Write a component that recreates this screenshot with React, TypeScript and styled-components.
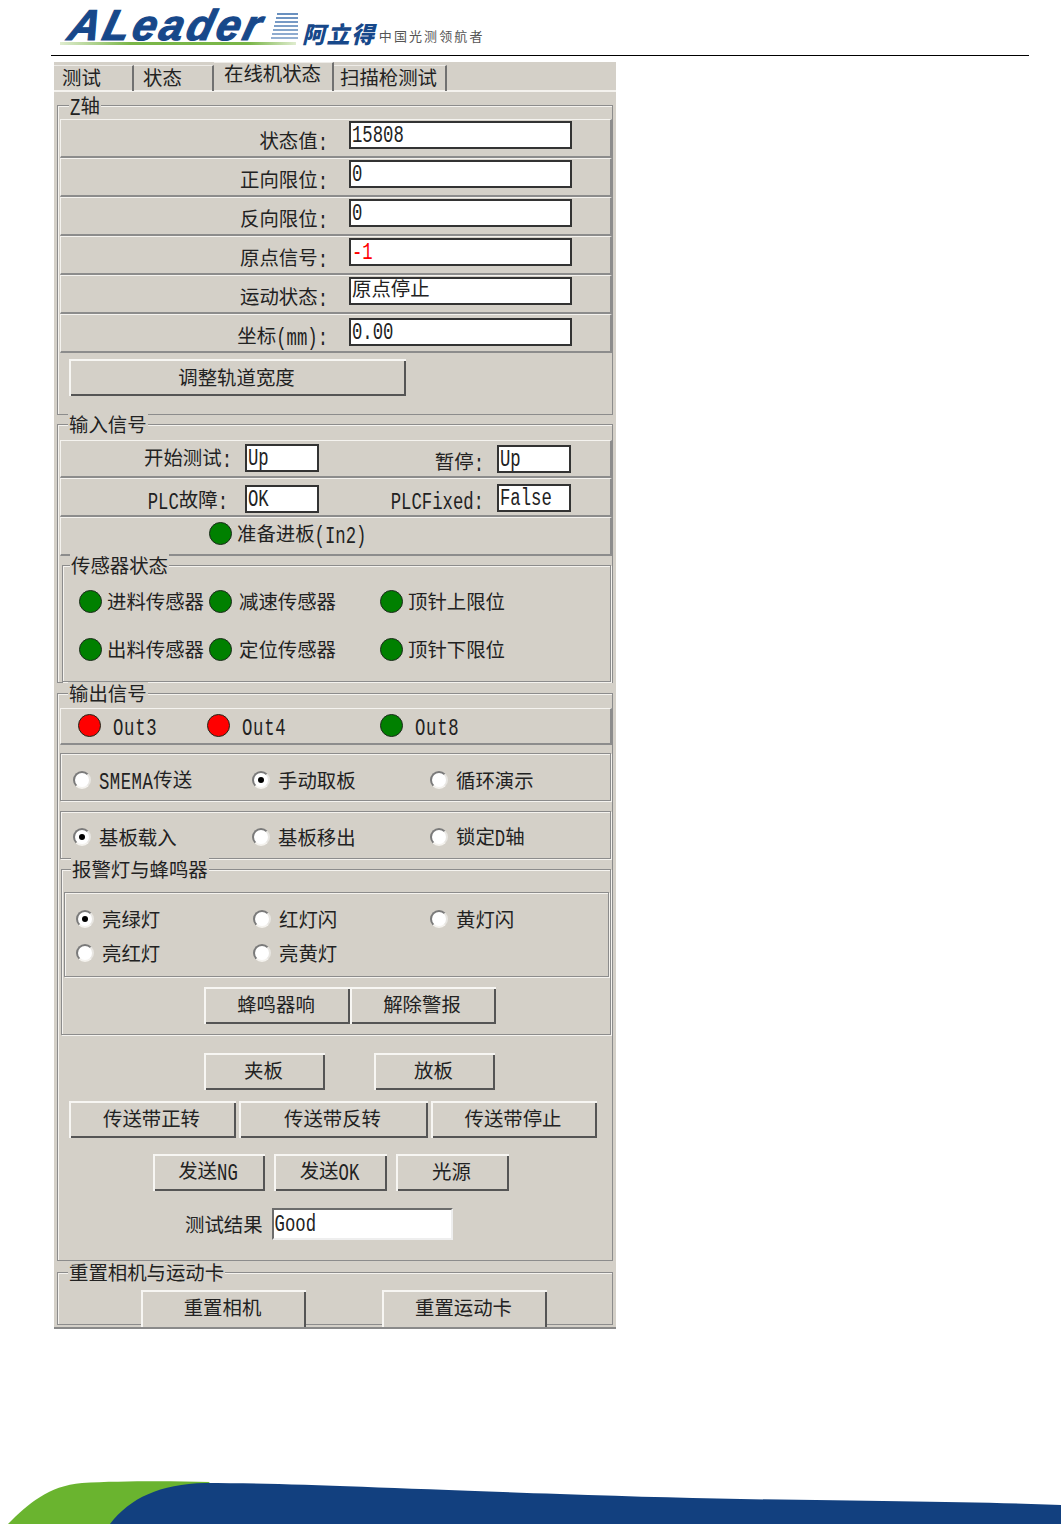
import React from "react";
import styled, { createGlobalStyle } from "styled-components";

const Global = createGlobalStyle`
  html, body { margin: 0; padding: 0; background: #fff; }
  body { font-family: "Noto Sans CJK SC", "Liberation Sans", sans-serif; color: #222; overflow: hidden; }
  * { box-sizing: border-box; }
`;

const Page = styled.div`
  height: 1524px; display: flex; flex-direction: column; overflow: hidden;
`;
const Header = styled.header`
  height: 56px; margin-left: 51px; width: 978px; border-bottom: 1px solid #000;
  display: flex; align-items: flex-start; padding-left: 10px; position: relative;
`;
const LogoWord = styled.div`
  font-family: "Liberation Sans", sans-serif; font-weight: 700; font-style: italic;
  font-size: 43px; line-height: 40px; color: #17488a; letter-spacing: 3.2px;
  -webkit-text-stroke: 1.2px #17488a;
  transform: skewX(-14deg); transform-origin: left bottom; width: 208px; margin-top: 5px; margin-left: 4px;
  white-space: nowrap;
`;
const LogoLines = styled.svg`
  width: 30px; height: 26px; margin-top: 13px; margin-left: -5px; flex: none;
`;
const LogoUnderline = styled.div`
  position: absolute; left: 9px; top: 42px; width: 236px; height: 3px;
  background: linear-gradient(90deg, #dfeccf, #7ab648 30%, #7ab648 80%, #dfeccf);
`;
const LogoCn = styled.div`
  font-weight: 900; font-style: italic; font-size: 23px; line-height: 24px; letter-spacing: 1.6px;
  color: #17488a; margin-top: 21px; margin-left: 4px; white-space: nowrap;
`;
const LogoSlogan = styled.div`
  font-size: 13px; line-height: 16px; letter-spacing: 2.1px; color: #555;
  margin-top: 28px; margin-left: 3px; white-space: nowrap;
`;

const Panel = styled.main`
  width: 562px; height: 1267px; margin: 6px 0 0 54px; background: #d4d0c8;
  border-bottom: 2px solid #8a8a8a; font-size: 19.4px; line-height: 24px;
`;
const TabBar = styled.nav`
  height: 30px; display: flex; border-bottom: 2px solid #f4f2ee; align-items: flex-end;
`;
const Tab = styled.div<{ $w: number; $pad: number; $active?: boolean }>`
  width: ${(p) => p.$w}px; height: ${(p) => (p.$active ? 29 : 26)}px; padding-left: ${(p) => p.$pad}px;
  align-self: flex-start; margin-top: ${(p) => (p.$active ? 0 : 3)}px;
  border-right: 2px solid #707070; border-top: 1px solid #eeece8;
  line-height: ${(p) => (p.$active ? 19 : 21)}px; white-space: nowrap;
`;
const Group = styled.section<{ $h: number; $top: number; $pad?: number }>`
  position: relative; height: ${(p) => p.$h}px; margin: ${(p) => p.$top}px 3px 0;
  border: 1px solid #8c8c8c; box-shadow: inset 1px 1px #f5f3ef;
  padding: ${(p) => p.$pad ?? 14}px 0 0 2px;
`;
const Legend = styled.h3<{ $x?: number }>`
  position: absolute; left: ${(p) => p.$x ?? 10}px; top: -12px; margin: 0; padding: 0 1px;
  font-size: 19.4px; font-weight: 400; line-height: 22px; background: #d4d0c8; white-space: nowrap;
`;
const Row = styled.div<{ $h: number; $cols?: string; $gap?: number }>`
  height: ${(p) => p.$h}px; display: grid; align-items: center;
  grid-template-columns: ${(p) => p.$cols ?? "none"}; column-gap: ${(p) => p.$gap ?? 0}px;
  border: 1px solid; border-color: #f5f3ef #8c8c8c #8c8c8c #f5f3ef; border-right-width: 2px; border-bottom-width: 2px;
`;
const Label = styled.span<{ $shift?: number; $drop?: number }>`
  text-align: right; white-space: nowrap; padding-right: ${(p) => p.$shift ?? 0}px;
  margin-top: ${(p) => p.$drop ?? 5}px;
`;
const Latin = styled.span<{ $track?: number }>`
  display: inline-block; font-family: "Liberation Mono", monospace; font-size: 17.3px; line-height: 1;
  letter-spacing: ${(p) => p.$track ?? 0}px; transform: scaleY(1.35);
`;
const Field = styled.div<{ $top?: number; $left?: number; $color?: string }>`
  height: 28px; align-self: start; margin: ${(p) => p.$top ?? 1}px 0 0 ${(p) => p.$left ?? 0}px;
  background: #fff; border: 2px solid #333; padding: 0 1px;
  font-size: 19.4px; line-height: 17px; color: ${(p) => p.$color ?? "#222"};
  white-space: nowrap;
`;
const Sunken = styled.div`
  width: 181px; height: 32px; background: #fff; border: 2px solid; border-color: #6c6c6c #eee #eee #6c6c6c;
  line-height: 22px; padding-left: 1px;
`;
const Btn = styled.button<{ $w: number; $flat?: boolean; $lift?: number }>`
  width: ${(p) => p.$w}px; height: 37px; flex: none; padding: 0 2px ${(p) => p.$lift ?? 4}px 0; background: #d4d0c8; color: #222;
  font: inherit; border: 0; cursor: default; position: relative;
  box-shadow: inset 2px 2px #f7f6f3, inset -2px ${(p) => (p.$flat ? "0" : "-2px")} #555;
`;
const BtnRow = styled.div<{ $indent: number; $top: number; $gap?: number }>`
  display: flex; align-items: center; margin: ${(p) => p.$top}px 0 0 ${(p) => p.$indent}px; gap: ${(p) => p.$gap ?? 0}px;
`;
const Led = styled.i<{ $on: "g" | "r" }>`
  display: block; width: 23px; height: 23px; border-radius: 50%; flex: none;
  background: ${(p) => (p.$on === "g" ? "#008000" : "#ff0000")}; border: 1.5px solid #1c2a1c;
`;
const Item = styled.div<{ $gap?: number }>`
  display: flex; align-items: center; gap: ${(p) => p.$gap ?? 5}px; white-space: nowrap;
`;
const ItemText = styled.span`margin-top: -1px;`;
const Dots = styled.div<{ $cols: string; $row: number; $left: number; $top?: number }>`
  display: grid; grid-template-columns: ${(p) => p.$cols}; grid-auto-rows: ${(p) => p.$row}px; align-items: center;
  padding: ${(p) => p.$top ?? 0}px 0 0 ${(p) => p.$left}px; height: 100%;
`;
const Frame = styled.div<{ $h: number; $top: number; $left: number; $w: number; $pad?: number }>`
  position: relative; height: ${(p) => p.$h}px; width: ${(p) => p.$w}px;
  margin: ${(p) => p.$top}px 0 0 ${(p) => p.$left}px; padding-top: ${(p) => p.$pad ?? 0}px;
  border: 1px solid #8c8c8c; box-shadow: inset 1px 1px #f5f3ef, 1px 1px #f5f3ef;
`;
const RadioOuter = styled.i<{ $on?: boolean }>`
  width: 18px; height: 18px; border-radius: 50%; flex: none; display: flex; align-items: center; justify-content: center;
  background: #fff; border: 2px solid; border-color: #7a7a7a #e8e6e2 #f4f2ee #7a7a7a;
  &::after { content: ""; width: 6px; height: 6px; border-radius: 50%; background: ${(p) => (p.$on ? "#000" : "transparent")}; }
`;
const Footer = styled.svg`
  display: block; margin-top: auto; width: 1063px; height: 44px; flex: none;
`;
const TestRow = styled.div`
  display: flex; align-items: center; gap: 9px; margin: 17px 0 0 125px;
`;

const Radio = ({ on, children, gap = 8 }: { on?: boolean; children: React.ReactNode; gap?: number }) => (
  <Item $gap={gap}><RadioOuter $on={on} /><ItemText>{children}</ItemText></Item>
);
const Lamp = ({ c, children, gap }: { c: "g" | "r"; children: React.ReactNode; gap?: number }) => (
  <Item $gap={gap}><Led $on={c} /><ItemText>{children}</ItemText></Item>
);
const colon = <Latin>:</Latin>;

const zRows: { l: React.ReactNode; v: React.ReactNode; top?: number; color?: string }[] = [
  { l: <>状态值{colon}</>, v: <Latin>15808</Latin> },
  { l: <>正向限位{colon}</>, v: <Latin>0</Latin> },
  { l: <>反向限位{colon}</>, v: <Latin>0</Latin> },
  { l: <>原点信号{colon}</>, v: <Latin>-1</Latin>, color: "#f00" },
  { l: <>运动状态{colon}</>, v: "原点停止" },
  { l: <>坐标<Latin>(mm)</Latin>{colon}</>, v: <Latin>0.00</Latin>, top: 3 },
];
const signalCols = "171px 87px 165px 87px";

export default function App() {
  return (
    <Page>
      <Global />
      <Header>
        <LogoWord>ALeader</LogoWord>
        <LogoLines viewBox="0 0 30 26" aria-hidden>
          {[1, 5, 9, 13, 17, 21, 25].map((y, i) => (
            <path key={y} d={`M${9 - i} ${y}H30`} stroke="#4f7cb4" strokeWidth="1.7" opacity={1 - i * 0.05} />
          ))}
        </LogoLines>
        <LogoUnderline />
        <LogoCn>阿立得</LogoCn>
        <LogoSlogan>中国光测领航者</LogoSlogan>
      </Header>
      <Panel>
        <TabBar>
          <Tab $w={80} $pad={8}>测试</Tab>
          <Tab $w={80} $pad={9}>状态</Tab>
          <Tab $w={120} $pad={10} $active>在线机状态</Tab>
          <Tab $w={113} $pad={6}>扫描枪测试</Tab>
        </TabBar>

        <Group $h={310} $top={13} $pad={13}>
          <Legend $x={11}><Latin>Z</Latin>轴</Legend>
          {zRows.map((r, i) => (
            <Row key={i} $h={39} $cols="267px 223px" $gap={21}>
              <Label>{r.l}</Label>
              <Field $top={r.top} $color={r.color}>{r.v}</Field>
            </Row>
          ))}
          <BtnRow $indent={9} $top={6}><Btn $w={337} $lift={1}>调整轨道宽度</Btn></BtnRow>
        </Group>

        <Group $h={259} $top={9} $pad={15}>
          <Legend>输入信号</Legend>
          <Row $h={38} $cols={signalCols}>
            <Label $drop={-2}>开始测试{colon}</Label>
            <Field $top={3} $left={13}><Latin>Up</Latin></Field>
            <Label>暂停{colon}</Label>
            <Field $top={4} $left={13}><Latin>Up</Latin></Field>
          </Row>
          <Row $h={39} $cols={signalCols}>
            <Label $shift={4}><Latin>PLC</Latin>故障{colon}</Label>
            <Field $top={6} $left={13}><Latin>OK</Latin></Field>
            <Label $shift={-2}><Latin>PLCFixed:</Latin></Label>
            <Field $top={5} $left={13}><Latin>False</Latin></Field>
          </Row>
          <Row $h={39} $cols="1fr">
            <Dots $cols="1fr" $row={31} $left={148}>
              <Lamp c="g">准备进板<Latin>(In2)</Latin></Lamp>
            </Dots>
          </Row>
          <Frame $h={117} $top={9} $left={2} $w={549} $pad={11}>
            <Legend $x={7}>传感器状态</Legend>
            <Dots $cols="130px 171px 1fr" $row={48} $left={16}>
              <Lamp c="g">进料传感器</Lamp>
              <Lamp c="g" gap={7}>减速传感器</Lamp>
              <Lamp c="g">顶针上限位</Lamp>
              <Lamp c="g">出料传感器</Lamp>
              <Lamp c="g" gap={7}>定位传感器</Lamp>
              <Lamp c="g">顶针下限位</Lamp>
            </Dots>
          </Frame>
        </Group>

        <Group $h={568} $top={10}>
          <Legend>输出信号</Legend>
          <Row $h={37} $cols="1fr">
            <Dots $cols="129px 173px 1fr" $row={33} $left={17}>
              <Lamp c="r" gap={12}><Latin $track={0.7}>Out3</Latin></Lamp>
              <Lamp c="r" gap={12}><Latin $track={0.7}>Out4</Latin></Lamp>
              <Lamp c="g" gap={12}><Latin $track={0.7}>Out8</Latin></Lamp>
            </Dots>
          </Row>
          <Frame $h={48} $top={8} $left={0} $w={551}>
            <Dots $cols="179px 178px 1fr" $row={46} $left={12} $top={3}>
              <Radio><Latin $track={0.5}>SMEMA</Latin>传送</Radio>
              <Radio on>手动取板</Radio>
              <Radio>循环演示</Radio>
            </Dots>
          </Frame>
          <Frame $h={48} $top={10} $left={0} $w={551}>
            <Dots $cols="179px 178px 1fr" $row={46} $left={12} $top={2}>
              <Radio on>基板载入</Radio>
              <Radio>基板移出</Radio>
              <Radio>锁定<Latin>D</Latin>轴</Radio>
            </Dots>
          </Frame>
          <Frame $h={166} $top={10} $left={1} $w={550} $pad={22}>
            <Legend $x={9}>报警灯与蜂鸣器</Legend>
            <Frame $h={85} $top={0} $left={2} $w={545} $pad={9}>
              <Dots $cols="177px 177px 1fr" $row={34} $left={11}>
                <Radio on>亮绿灯</Radio>
                <Radio>红灯闪</Radio>
                <Radio>黄灯闪</Radio>
                <Radio>亮红灯</Radio>
                <Radio>亮黄灯</Radio>
              </Dots>
            </Frame>
            <BtnRow $indent={142} $top={10}>
              <Btn $w={146}>蜂鸣器响</Btn>
              <Btn $w={146}>解除警报</Btn>
            </BtnRow>
          </Frame>
          <BtnRow $indent={144} $top={18} $gap={49}>
            <Btn $w={121}>夹板</Btn>
            <Btn $w={121}>放板</Btn>
          </BtnRow>
          <BtnRow $indent={9} $top={11} $gap={3}>
            <Btn $w={167}>传送带正转</Btn>
            <Btn $w={189}>传送带反转</Btn>
            <Btn $w={166}>传送带停止</Btn>
          </BtnRow>
          <BtnRow $indent={93} $top={16} $gap={9}>
            <Btn $w={112}>发送<Latin>NG</Latin></Btn>
            <Btn $w={113}>发送<Latin>OK</Latin></Btn>
            <Btn $w={113}>光源</Btn>
          </BtnRow>
          <TestRow>
            <span>测试结果</span>
            <Sunken><Latin>Good</Latin></Sunken>
          </TestRow>
        </Group>

        <Group $h={53} $top={11} $pad={17}>
          <Legend>重置相机与运动卡</Legend>
          <BtnRow $indent={81} $top={0} $gap={76}>
            <Btn $w={165} $flat>重置相机</Btn>
            <Btn $w={165} $flat>重置运动卡</Btn>
          </BtnRow>
        </Group>
      </Panel>
      <Footer viewBox="0 0 1063 44" aria-hidden>
        <path d="M8 44C28 24 48 6 82 3 120 1 170 1 210 2L150 44Z" fill="#6ab42f" />
        <path d="M110 44C130 18 160 4 205 3 290 3 380 8 560 14 780 22 930 20 1061 25V44Z" fill="#12407f" />
      </Footer>
    </Page>
  );
}
